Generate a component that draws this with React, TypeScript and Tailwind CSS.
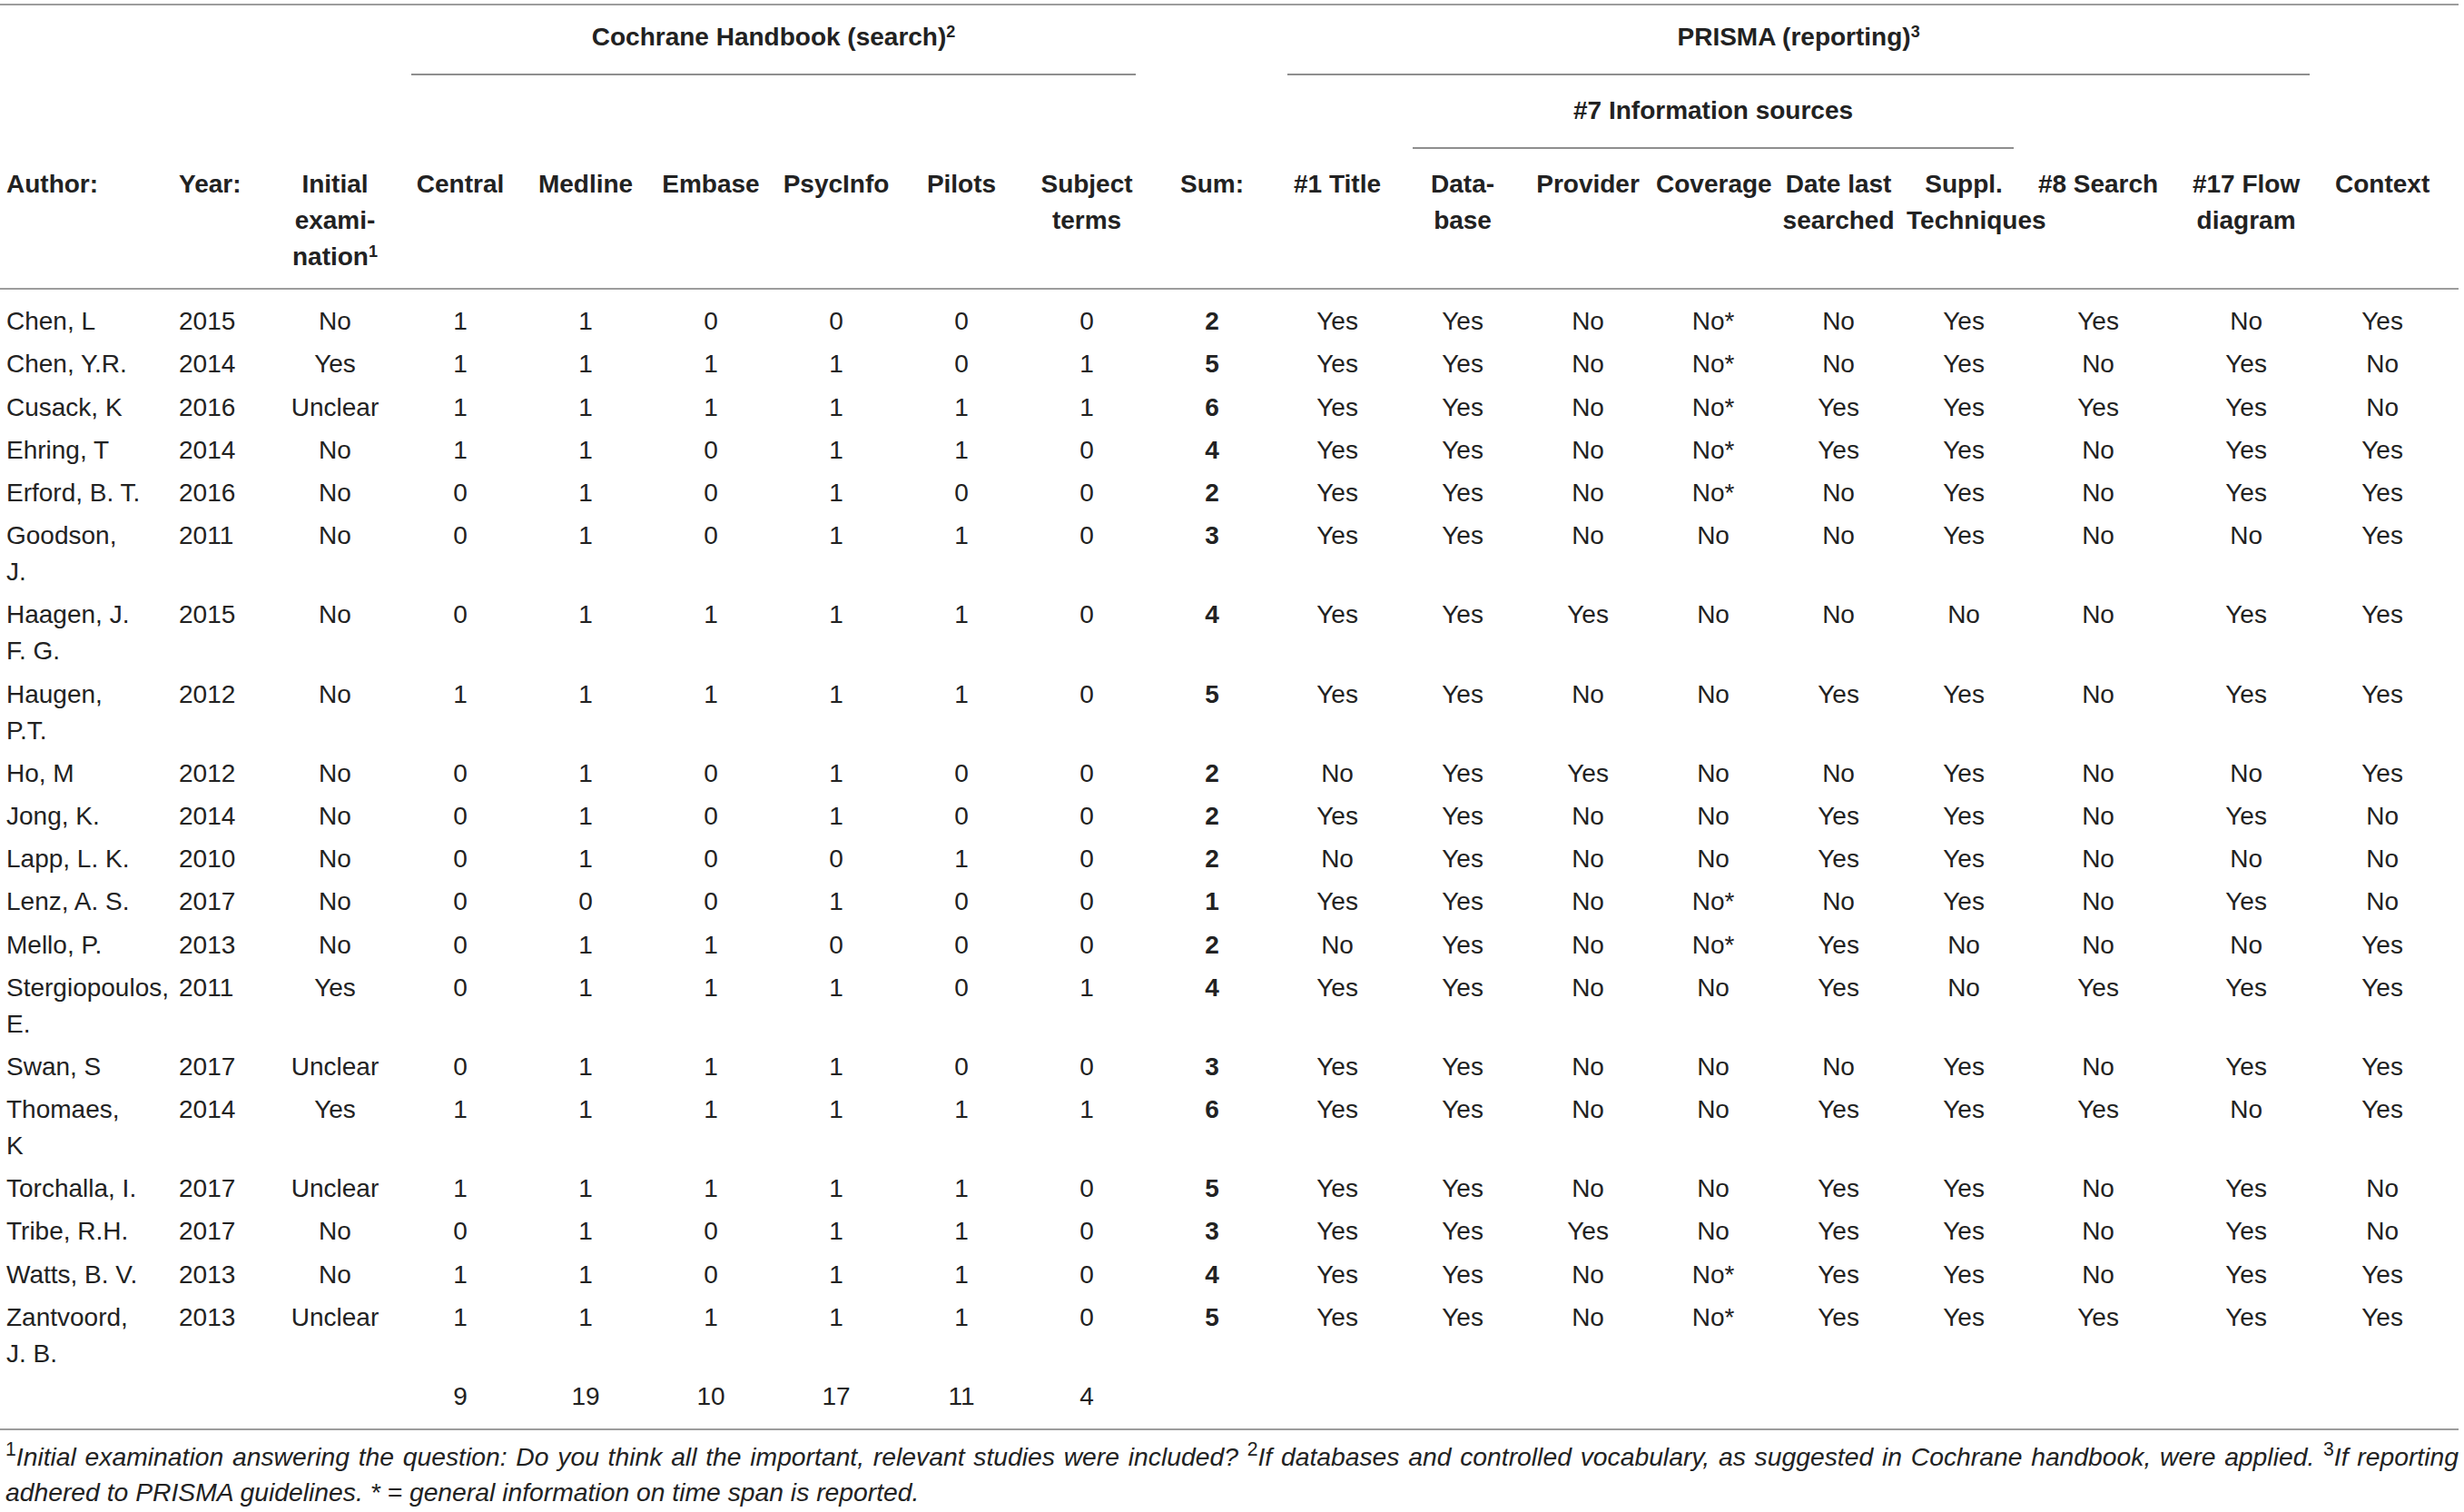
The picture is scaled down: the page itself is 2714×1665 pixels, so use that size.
import React from "react";

type Row = {
  author: string[];
  year: string;
  initial: string;
  nums: string[];
  sum: string;
  prisma: string[];
};

const raw: [string, string, string, string, string, string][] = [
  ["Chen, L", "2015", "No", "110000", "2", "Yes Yes No No* No Yes Yes No Yes"],
  ["Chen, Y.R.", "2014", "Yes", "111101", "5", "Yes Yes No No* No Yes No Yes No"],
  ["Cusack, K", "2016", "Unclear", "111111", "6", "Yes Yes No No* Yes Yes Yes Yes No"],
  ["Ehring, T", "2014", "No", "110110", "4", "Yes Yes No No* Yes Yes No Yes Yes"],
  ["Erford, B. T.", "2016", "No", "010100", "2", "Yes Yes No No* No Yes No Yes Yes"],
  ["Goodson,|J.", "2011", "No", "010110", "3", "Yes Yes No No No Yes No No Yes"],
  ["Haagen, J.|F. G.", "2015", "No", "011110", "4", "Yes Yes Yes No No No No Yes Yes"],
  ["Haugen,|P.T.", "2012", "No", "111110", "5", "Yes Yes No No Yes Yes No Yes Yes"],
  ["Ho, M", "2012", "No", "010100", "2", "No Yes Yes No No Yes No No Yes"],
  ["Jong, K.", "2014", "No", "010100", "2", "Yes Yes No No Yes Yes No Yes No"],
  ["Lapp, L. K.", "2010", "No", "010010", "2", "No Yes No No Yes Yes No No No"],
  ["Lenz, A. S.", "2017", "No", "000100", "1", "Yes Yes No No* No Yes No Yes No"],
  ["Mello, P.", "2013", "No", "011000", "2", "No Yes No No* Yes No No No Yes"],
  ["Stergiopoulos,|E.", "2011", "Yes", "011101", "4", "Yes Yes No No Yes No Yes Yes Yes"],
  ["Swan, S", "2017", "Unclear", "011100", "3", "Yes Yes No No No Yes No Yes Yes"],
  ["Thomaes,|K", "2014", "Yes", "111111", "6", "Yes Yes No No Yes Yes Yes No Yes"],
  ["Torchalla, I.", "2017", "Unclear", "111110", "5", "Yes Yes No No Yes Yes No Yes No"],
  ["Tribe, R.H.", "2017", "No", "010110", "3", "Yes Yes Yes No Yes Yes No Yes No"],
  ["Watts, B. V.", "2013", "No", "110110", "4", "Yes Yes No No* Yes Yes No Yes Yes"],
  ["Zantvoord,|J. B.", "2013", "Unclear", "111110", "5", "Yes Yes No No* Yes Yes Yes Yes Yes"],
];

const rows: Row[] = raw.map(([a, y, i, n, s, p]) => ({
  author: a.split("|"),
  year: y,
  initial: i,
  nums: n.split(""),
  sum: s,
  prisma: p.split(" "),
}));

const widths = [
  "w-[192px]",
  "w-[108px]",
  "w-[138px]",
  "w-[138px]",
  "w-[138px]",
  "w-[138px]",
  "w-[138px]",
  "w-[138px]",
  "w-[138px]",
  "w-[138px]",
  "w-[138px]",
  "w-[138px]",
  "w-[138px]",
  "w-[138px]",
  "w-[138px]",
  "w-[138px]",
  "w-[158px]",
  "w-[168px]",
  "w-[150px]",
];

const hCell = "pt-[19px] pb-[14px] px-[6px] align-top text-center font-bold border-b-2 border-[#9d9d9d]";

function Lines({ lines }: { lines: React.ReactNode[] }) {
  return (
    <>
      {lines.map((l, i) => (
        <React.Fragment key={i}>
          {i > 0 && <br />}
          {l}
        </React.Fragment>
      ))}
    </>
  );
}

export default function App() {
  return (
    <div className="bg-white w-[2714px] min-h-[1665px] pt-[4px] font-['Liberation_Sans',Arial,sans-serif] text-[28px] leading-[40px] text-[#222]">
      <table className="table-fixed border-collapse w-[2708px] border-t-2 border-b-2 border-[#9d9d9d]">
        <colgroup>
          {widths.map((w, i) => (
            <col key={i} className={w} />
          ))}
        </colgroup>
        <thead>
          <tr>
            <th colSpan={3} />
            <th colSpan={6} className="pt-[15px] pb-0 px-0 font-bold text-center align-top">
              <div className="mx-[15px] pb-[20px] border-b-2 border-[#8f8f8f]">
                Cochrane Handbook (search)<sup className="text-[18px]">2</sup>
              </div>
            </th>
            <th />
            <th colSpan={8} className="pt-[15px] pb-0 px-0 font-bold text-center align-top">
              <div className="mx-[14px] pb-[20px] border-b-2 border-[#8f8f8f]">
                PRISMA (reporting)<sup className="text-[18px]">3</sup>
              </div>
            </th>
            <th />
          </tr>
          <tr>
            <th colSpan={11} />
            <th colSpan={5} className="pt-[19px] pb-0 px-0 font-bold text-center align-top">
              <div className="mx-[14px] pb-[20px] border-b-2 border-[#8f8f8f]">#7 Information sources</div>
            </th>
            <th colSpan={3} />
          </tr>
          <tr>
            <th className="pt-[19px] pb-[14px] pl-[7px] pr-0 align-top text-left font-bold border-b-2 border-[#9d9d9d]">Author:</th>
            <th className="pt-[19px] pb-[14px] pl-[5px] pr-0 align-top text-left font-bold border-b-2 border-[#9d9d9d]">Year:</th>
            <th className={hCell}>
              Initial
              <br />
              exami-
              <br />
              nation<sup className="text-[18px]">1</sup>
            </th>
            <th className={hCell}>Central</th>
            <th className={hCell}>Medline</th>
            <th className={hCell}>Embase</th>
            <th className={hCell}>PsycInfo</th>
            <th className={hCell}>Pilots</th>
            <th className={hCell}>
              Subject
              <br />
              terms
            </th>
            <th className={hCell}>Sum:</th>
            <th className={hCell}>#1 Title</th>
            <th className={hCell}>
              Data-
              <br />
              base
            </th>
            <th className={hCell}>Provider</th>
            <th className={hCell}>Coverage</th>
            <th className={hCell}>
              Date last
              <br />
              searched
            </th>
            <th className={hCell}>
              Suppl.
              <br />
              <span className="whitespace-nowrap">Techniques</span>
            </th>
            <th className={hCell}>#8 Search</th>
            <th className={hCell}>
              #17 Flow
              <br />
              diagram
            </th>
            <th className="pt-[19px] pb-[14px] pl-[6px] pr-[24px] align-top text-center font-bold border-b-2 border-[#9d9d9d]">Context</th>
          </tr>
        </thead>
        <tbody className="font-normal">
          {rows.map((r, idx) => {
            const py = idx === 0 ? "pt-[15.3px] pb-[3.6px]" : "py-[3.6px]";
            const c = `${py} px-[6px] align-top text-center`;
            return (
              <tr key={idx}>
                <td className={`${py} pl-[7px] pr-0 align-top text-left whitespace-nowrap`}>
                  <Lines lines={r.author} />
                </td>
                <td className={`${py} pl-[5px] pr-0 align-top text-left`}>{r.year}</td>
                <td className={c}>{r.initial}</td>
                {r.nums.map((n, j) => (
                  <td key={j} className={c}>
                    {n}
                  </td>
                ))}
                <td className={`${c} font-bold`}>{r.sum}</td>
                {r.prisma.map((p, j) => (
                  <td key={j} className={j === 8 ? `${py} pl-[6px] pr-[24px] align-top text-center` : c}>
                    {p}
                  </td>
                ))}
              </tr>
            );
          })}
          <tr>
            <td colSpan={3} className="pt-[3.6px] pb-[14.6px]" />
            {["9", "19", "10", "17", "11", "4"].map((t, i) => (
              <td key={i} className="pt-[3.6px] pb-[14.6px] px-[6px] align-top text-center">
                {t}
              </td>
            ))}
            <td colSpan={10} className="pt-[3.6px] pb-[14.6px]" />
          </tr>
        </tbody>
      </table>
      <p className="pt-[10px] pl-[6px] pr-[6px] w-[2714px] italic text-justify leading-[39px] text-[28.3px] text-[#222]">
        <sup className="not-italic">1</sup>Initial examination answering the question: Do you think all the important, relevant studies were included?{" "}
        <sup className="not-italic">2</sup>If databases and controlled vocabulary, as suggested in Cochrane handbook, were applied.{" "}
        <sup className="not-italic">3</sup>If reporting adhered to PRISMA guidelines. * = general information on time span is reported.
      </p>
    </div>
  );
}
